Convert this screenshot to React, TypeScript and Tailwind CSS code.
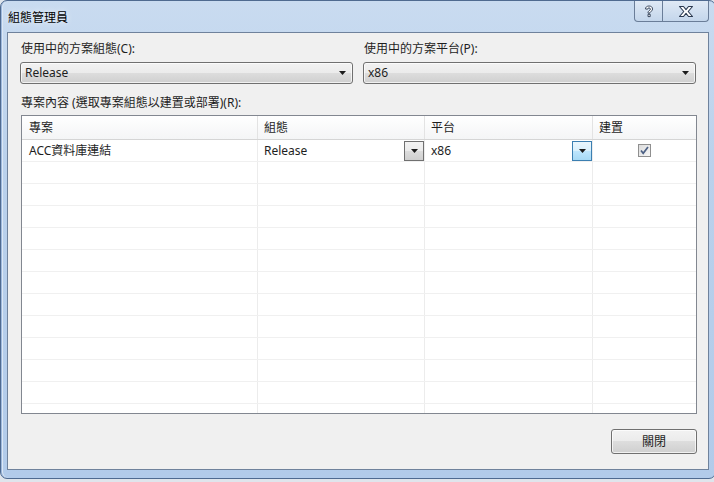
import React from "react";

function Arrow() {
  return (
    <svg width="7" height="4" viewBox="0 0 7 4" className="shrink-0">
      <path d="M0 0h7L3.5 4z" fill="#1b1b1b" />
    </svg>
  );
}

function Combo({ value }: { value: string }) {
  return (
    <div className="h-[22px] rounded-[3px] border border-[#707070] bg-[linear-gradient(to_bottom,#f2f2f2_0%,#ebebeb_50%,#dddddd_50%,#cfcfcf_100%)] flex items-center justify-between pl-[4px] pr-[6px] shadow-[inset_0_0_0_1px_rgba(255,255,255,0.7)]">
      <span>{value}</span>
      <Arrow />
    </div>
  );
}

function CellDrop({ hot }: { hot?: boolean }) {
  return (
    <div
      className={`w-[20px] h-[20px] flex items-center justify-center border ${
        hot
          ? "border-[#3c7fb1] bg-[linear-gradient(to_bottom,#eaf6fd_0%,#d9f0fc_50%,#bee6fd_50%,#a7d9f5_100%)]"
          : "border-[#707070] bg-[linear-gradient(to_bottom,#f2f2f2_0%,#ebebeb_50%,#dddddd_50%,#cfcfcf_100%)]"
      }`}
    >
      <Arrow />
    </div>
  );
}

export default function App() {
  const emptyRows = Array.from({ length: 12 });

  return (
    <div className="w-[714px] h-[482px] overflow-hidden bg-[#dfe5ec] font-['Segoe_UI','Noto_Sans','Noto_Sans_CJK_TC',sans-serif] text-[12px] text-[#1e1e1e]">
      <div className="h-[479px] w-[716px] flex flex-col rounded-[7px] border border-[#4f6a90] bg-[linear-gradient(to_bottom,#c9dbf0_0%,#bad1ec_35%,#b2cbea_100%)] shadow-[inset_1px_0_0_#9db8dc,inset_2px_0_0_#dbe7f5]">
        {/* Title bar */}
        <div className="h-[31px] flex items-start justify-between pl-[7px] pr-[6px]">
          <span className="pt-[9px] text-[12px] leading-[15px] text-black [text-shadow:0_0_6px_rgba(255,255,255,0.9)]">
            組態管理員
          </span>
          <div className="flex">
            <div className="w-[29px] h-[21px] rounded-bl-[4px] border border-t-0 border-[#6a7d98] bg-[linear-gradient(to_bottom,#dfe9f5,#c4d6eb)] flex items-center justify-center">
              <svg width="10" height="13" viewBox="0 0 10 13">
                <path
                  d="M1.5 4C1.5 2 3 1 5 1s3.5 1 3.5 3c0 1.6-1 2.2-2 2.8-.6.4-.7.7-.7 1.4H4c0-1.3.3-1.9 1.2-2.5.8-.5 1.2-.8 1.2-1.6 0-.8-.6-1.2-1.4-1.2-.9 0-1.4.5-1.4 1.3z M4 9.3h2.2v2.3H4z"
                  fill="#ffffff"
                  stroke="#2a3950"
                  strokeWidth="0.9"
                  strokeLinejoin="round"
                />
              </svg>
            </div>
            <div className="w-[46px] h-[21px] rounded-br-[4px] border border-t-0 border-l-0 border-[#6a7d98] bg-[linear-gradient(to_bottom,#dfe9f5,#c4d6eb)] flex items-center justify-center">
              <svg width="16" height="13" viewBox="0 0 16 13">
                <path
                  d="M1.5 1.5h4L8 4.6l2.5-3.1h4L10.2 6.5l4.3 5h-4L8 8.4l-2.5 3.1h-4L5.8 6.5z"
                  fill="#ffffff"
                  stroke="#2a3950"
                  strokeWidth="1.1"
                  strokeLinejoin="round"
                />
              </svg>
            </div>
          </div>
        </div>

        {/* Client area */}
        <div className="mx-[6px] h-[438px] border border-[#6f829c] bg-[#f0f0f0] flex flex-col">
          <div className="flex gap-[10px] pl-[12px] pr-[10px] pt-[8px]">
            <div className="w-[333px] flex flex-col gap-[6px]">
              <span className="pl-[1px] leading-[15px]">使用中的方案組態(C):</span>
              <Combo value="Release" />
            </div>
            <div className="w-[333px] flex flex-col gap-[6px]">
              <span className="pl-[1px] leading-[15px]">使用中的方案平台(P):</span>
              <Combo value="x86" />
            </div>
          </div>

          <span className="pl-[13px] mt-[11px] leading-[15px]">專案內容 (選取專案組態以建置或部署)(R):</span>

          {/* Grid */}
          <div className="ml-[13px] mr-[11px] mt-[5px] h-[299px] border border-[#828790] bg-white overflow-hidden">
            <div className="grid grid-cols-[236px_167px_168px_1fr] h-[24px] border-b border-[#d5d5d5] bg-[linear-gradient(to_bottom,#ffffff,#f4f5f6)]">
              <div className="border-r border-[#e3e3e3] flex items-center pl-[7px]">專案</div>
              <div className="border-r border-[#e3e3e3] flex items-center pl-[6px]">組態</div>
              <div className="border-r border-[#e3e3e3] flex items-center pl-[6px]">平台</div>
              <div className="flex items-center pl-[6px]">建置</div>
            </div>

            <div className="grid grid-cols-[236px_167px_168px_1fr] h-[22px] border-b border-[#f0f0f0]">
              <div className="border-r border-[#ececec] flex items-center pl-[7px] pt-[1px]">ACC資料庫連結</div>
              <div className="border-r border-[#ececec] flex items-center justify-between pl-[6px]">
                <span className="pt-[1px]">Release</span>
                <CellDrop />
              </div>
              <div className="border-r border-[#ececec] flex items-center justify-between pl-[6px]">
                <span className="pt-[1px]">x86</span>
                <CellDrop hot />
              </div>
              <div className="flex items-center justify-center">
                <div className="w-[13px] h-[13px] border border-[#8f8f8f] bg-[linear-gradient(to_bottom_right,#dcdcdc,#f7f7f7)] flex items-center justify-center">
                  <svg width="9" height="9" viewBox="0 0 9 9">
                    <path d="M1 4.5l2.2 2.8L8 1" fill="none" stroke="#4d6185" strokeWidth="1.7" />
                  </svg>
                </div>
              </div>
            </div>

            {emptyRows.map((_, i) => (
              <div key={i} className="grid grid-cols-[236px_167px_168px_1fr] h-[22px] border-b border-[#f0f0f0]">
                <div className="border-r border-[#ececec]" />
                <div className="border-r border-[#ececec]" />
                <div className="border-r border-[#ececec]" />
                <div />
              </div>
            ))}
          </div>

          <div className="flex justify-end pr-[11px] mt-[15px]">
            <button className="w-[86px] h-[25px] rounded-[3px] border border-[#707070] bg-[linear-gradient(to_bottom,#f2f2f2_0%,#ebebeb_50%,#dddddd_50%,#cfcfcf_100%)] shadow-[inset_0_0_0_1px_rgba(255,255,255,0.7)] flex items-center justify-center text-[12px]">
              關閉
            </button>
          </div>
        </div>
      </div>
    </div>
  );
}
